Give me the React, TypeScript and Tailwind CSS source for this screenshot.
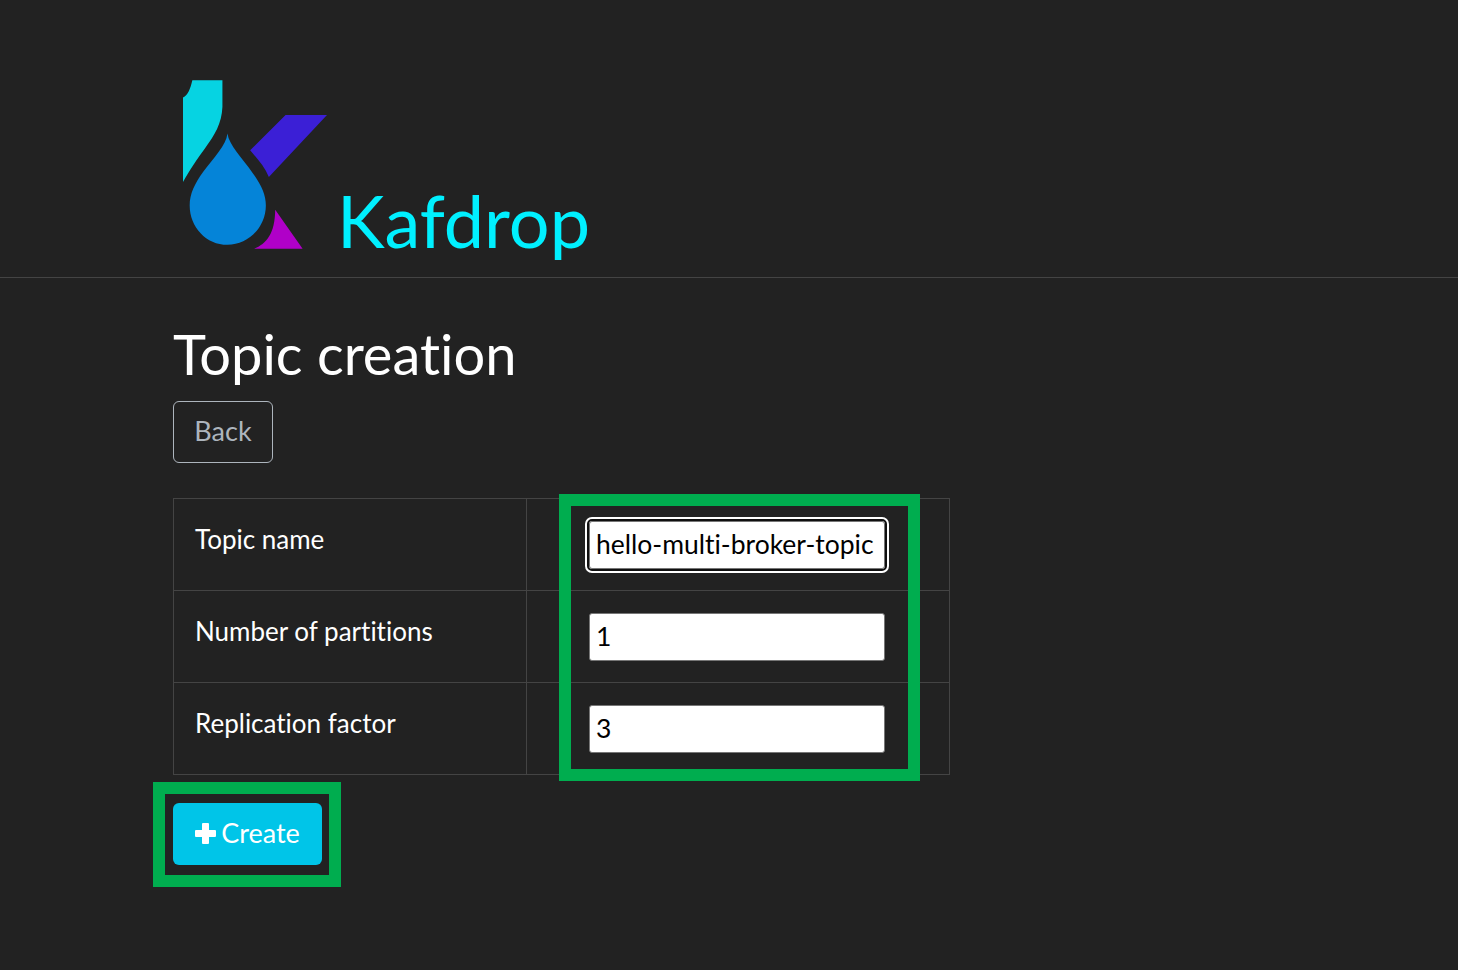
const rows = [
  { label: "Topic name", value: "hello-multi-broker-topic", focused: true },
  { label: "Number of partitions", value: "1", focused: false },
  { label: "Replication factor", value: "3", focused: false },
];

function KafdropLogo() {
  return (
    <svg viewBox="40 30 431 505" className="block h-[169px] w-[144px] shrink-0">
      <path
        d="M68 30 L158 30 L158 110 C156 160 135 195 105 235 C85 262 60 298 40 335 L40 82 C55 75 62 55 68 30 Z"
        fill="#06d3e2"
      />
      <path
        d="M173 190 C178 225 215 260 250 310 C275 345 288 375 288 405 C288 470 235 523 173 523 C110 523 60 470 60 405 C60 370 75 340 100 305 C130 265 170 225 173 190 Z"
        fill="#0584d8"
      />
      <path d="M347 134 L471 134 L297 320 C285 290 262 265 241 240 Z" fill="#3b1fd6" />
      <path d="M316 418 L398 535 L252 535 C290 520 315 490 316 418 Z" fill="#b000c8" />
    </svg>
  );
}

export default function App() {
  return (
    <div className="relative min-h-[970px] bg-[#222222] font-['Lato',sans-serif] text-white [font-variant-ligatures:none]">
      <header className="flex h-[278px] items-start border-b border-[#444444] pl-[183px] pt-[80px]">
        <KafdropLogo />
        <span className="ml-[10px] mt-[92px] text-[72px] leading-[96px] text-[#00f0ff]">Kafdrop</span>
      </header>

      <main className="pl-[173px] pt-[42px]">
        <h1 className="text-[56px] leading-[67px] font-normal">Topic creation</h1>
        <a className="mt-[14px] block h-[62px] w-[100px] rounded-[6px] border border-[#adb5bd] pb-[2px] text-center text-[27px] leading-[58px] text-[#adb5bd]">
          Back
        </a>

        <table className="mt-[35px] w-[777px] table-fixed border-collapse border border-[#444444] text-[26px]">
          <tbody>
            {rows.map((row) => (
              <tr key={row.label} className="h-[92px]">
                <td className="w-[353px] border border-[#444444] px-[21px] pb-[12px] align-middle leading-[38px]">{row.label}</td>
                <td className="border border-[#444444] pl-[62px] align-top pt-[22px]">
                  <input
                    readOnly
                    value={row.value}
                    className={
                      row.focused
                        ? "block h-[48px] w-[296px] rounded-[3px] border border-[#767676] bg-white px-[6px] pb-[2px] text-[26.5px] text-black outline-2 outline-[#101010] shadow-[0_0_0_4px_white]"
                        : "block h-[48px] w-[296px] rounded-[3px] border border-[#767676] bg-white px-[6px] pb-[2px] text-[26.5px] text-black"
                    }
                  />
                </td>
              </tr>
            ))}
          </tbody>
        </table>

        <button className="mt-[28px] flex h-[62px] w-[149px] items-center justify-center rounded-[6px] bg-[#00c5e8] pb-[2px] text-[27px] text-white">
          <svg viewBox="0 0 21 21" className="mr-[5px] h-[21px] w-[21px]">
            <path d="M7 1 a1 1 0 0 1 1 -1 h5 a1 1 0 0 1 1 1 v6 h6 a1 1 0 0 1 1 1 v5 a1 1 0 0 1 -1 1 h-6 v6 a1 1 0 0 1 -1 1 h-5 a1 1 0 0 1 -1 -1 v-6 h-6 a1 1 0 0 1 -1 -1 v-5 a1 1 0 0 1 1 -1 h6 z" fill="white" />
          </svg>
          Create
        </button>
      </main>

      {/* annotation boxes on top of the screenshot */}
      <div className="absolute left-[559px] top-[494px] h-[287px] w-[361px] border-[12px] border-[#00ad4f]" />
      <div className="absolute left-[153px] top-[782px] h-[105px] w-[188px] border-[12px] border-[#00ad4f]" />
    </div>
  );
}
